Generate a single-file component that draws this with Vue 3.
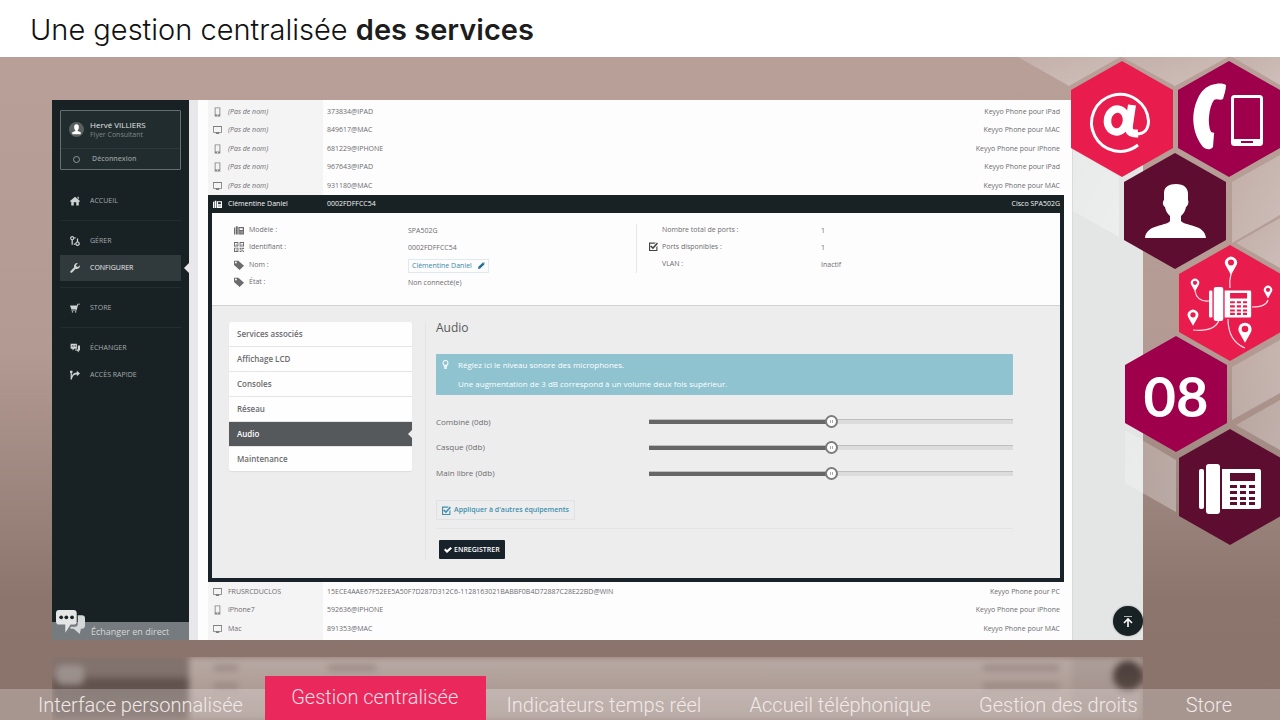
<script setup>
import { ref, h } from 'vue'

const icons = {
  tablet: 'M3 0h10v16H3zM4.500 1.500v11h7v-11zM7 13.500v1h2v-1z',
  desktop: 'M0 1h16v12h-5v2H5v-2H0zM1.500 2.500v9h13v-9z',
  desk: 'M0 4h2v11H0zM3 2h3v13H3zM7 3h9v12H7zM9 5v3h5V5zM9 9.500v1h1v-1zM11 9.500v1h1v-1zM13 9.500v1h1v-1zM9 12v1h1v-1zM11 12v1h1v-1zM13 12v1h1v-1z',
  qr: 'M0 0h7v7H0zM1.500 1.500v4h4v-4zM3 3h1.500v1.500H3zM9 0h7v7H9zM10.500 1.500v4h4v-4zM12 3h1.500v1.500H12zM0 9h7v7H0zM1.500 10.500v4h4v-4zM3 12h1.500v1.500H3zM9 9h3v3H9zM13 9h3v2h-3zM12 12h2v2h-2zM9 14h3v2H9zM14 14h2v2h-2z',
  tag: 'M0 1h7l9 8-7 7-9-8zM3 2.500a1.500 1.500 0 1 0 0 3 1.500 1.500 0 0 0 0-3z',
  ticked: 'M0 1h12l-2 2H2v11h11V9l2-2v9H0zM4 6l3 3 7-8 2 2-9 10-5-5z',
  pencil: 'M0 16l1-5L11 1l4 4L5 15zM12 0l1-.5L16 3l-.5 1z',
  home: 'M8 1l8 7-1 1.500-1-.8V15h-4v-5H6v5H2V8.700l-1 .8L0 8l8-7zM12 1h2v4l-2-1.500z',
  nodes: 'M3.500 0a3.500 3.500 0 0 1 1 6.800V14h-2V6.800A3.500 3.500 0 0 1 3.500 0zm0 2a1.500 1.500 0 1 0 0 3 1.500 1.500 0 0 0 0-3zM11 4h2v4.700a3.700 3.700 0 1 1-2 0zm1 6.500a1.700 1.700 0 1 0 0 3.400 1.700 1.700 0 0 0 0-3.400zM7 2h2v2H7zM6 12h2v2H6z',
  wrench: 'M15.700 3.500a5 5 0 0 1-6.500 5.800L3 15.400A1.800 1.800 0 0 1 .6 13L6.700 6.800A5 5 0 0 1 12.500.3L9.700 3.100l.6 2.600 2.600.6z',
  cart: 'M0 4h11l1-3h4v1.500h-3L10.500 12H2v-1.500h7l.3-1H2zM3 13h2v2H3zM8 13h2v2H8z',
  chat: 'M1 1h10v8H7l-3 3V9H1zM3 4v1.500h1.500V4zM5.500 4v1.500H7V4zM8 4v1.500h1.500V4zM12.500 4H16v8h-2v3l-3-3H8v-1.500h4.500z',
  branch: 'M0 1h4v4L3 4v6c1-4 4-6 8-6V1l5 4.500-5 4.500V7C7 7 4 9 3 15H1V4L0 5z',
  bulb: 'M8 0a5.500 5.500 0 0 1 3 10v2H5v-2A5.500 5.500 0 0 1 8 0zm0 2a3.500 3.500 0 0 0-2 6.400h4A3.500 3.500 0 0 0 8 2zM5.500 13h5v1.500L9 16H7l-1.500-1.500z',
  check: 'M0 8l3-3 3 3 7-6 3 3L6 14z'
}

const Icon = (props) =>
  h('svg', { viewBox: '0 0 16 16', 'aria-hidden': 'true' }, [
    h('path', { d: icons[props.name], fill: 'currentColor', 'fill-rule': 'evenodd' })
  ])
Icon.props = ['name']

const before = [
  ['tablet', '(Pas de nom)', '373834@IPAD', 'Keyyo Phone pour iPad'],
  ['desktop', '(Pas de nom)', '849617@MAC', 'Keyyo Phone pour MAC'],
  ['tablet', '(Pas de nom)', '681229@IPHONE', 'Keyyo Phone pour iPhone'],
  ['tablet', '(Pas de nom)', '967643@IPAD', 'Keyyo Phone pour iPad'],
  ['desktop', '(Pas de nom)', '931180@MAC', 'Keyyo Phone pour MAC']
]
const after = [
  ['desktop', 'FRUSRCDUCLOS', '15ECE4AAE67F52EE5A50F7D287D312C6-1128163021BABBF0B4D72887C28E22BD@WIN', 'Keyyo Phone pour PC'],
  ['tablet', 'iPhone7', '592636@IPHONE', 'Keyyo Phone pour iPhone'],
  ['desktop', 'Mac', '891353@MAC', 'Keyyo Phone pour MAC']
]
const menu = [
  [{ icon: 'home', label: 'ACCUEIL' }],
  [{ icon: 'nodes', label: 'GÉRER' }, { icon: 'wrench', label: 'CONFIGURER', active: true }],
  [{ icon: 'cart', label: 'STORE' }],
  [{ icon: 'chat', label: 'ÉCHANGER' }, { icon: 'branch', label: 'ACCÈS RAPIDE' }]
]
const tabs = ['Services associés', 'Affichage LCD', 'Consoles', 'Réseau', 'Audio', 'Maintenance']
const tab = ref('Audio')
const levels = ref([
  { id: 'combine', label: 'Combiné (0db)', value: 50 },
  { id: 'casque', label: 'Casque (0db)', value: 50 },
  { id: 'mainlibre', label: 'Main libre (0db)', value: 50 }
])
const chapters = ['Interface personnalisée', 'Gestion centralisée', 'Indicateurs temps réel', 'Accueil téléphonique', 'Gestion des droits', 'Store']
const chapter = ref('Gestion centralisée')

const hex = (x, y) => `${x},${y - 58} ${x + 51},${y - 29} ${x + 51},${y + 29} ${x},${y + 58} ${x - 51},${y + 29} ${x - 51},${y - 29}`
const cells = [
  { x: 1122, y: 119, fill: '#e91d4d' },
  { x: 1229, y: 119, fill: '#9e004c' },
  { x: 1175, y: 211, fill: '#5c0d30' },
  { x: 1230, y: 303, fill: '#e91d4d' },
  { x: 1176, y: 394, fill: '#9e004c' },
  { x: 1230, y: 487, fill: '#5c0d30' }
]
const pins = [[1231, 257, 1], [1195, 279, 0.7], [1268, 286, 0.7], [1193, 310, 0.88], [1245, 323, 1.1]]
</script>

<template>
  <div class="page">
    <header class="title"><h1>Une gestion centralisée <strong>des services</strong></h1></header>

    <main class="stage">
      <section class="window">
        <aside class="sidebar">
          <div class="user">
            <div class="who">
              <svg class="avatar" viewBox="0 0 16 16" aria-hidden="true"><circle cx="8" cy="8" r="8" fill="#59605f" /><path d="M5.500 5.500a2.500 3 0 0 1 5 0c0 1.500-.5 2.500-1.200 3.200v.8l3.200 1.300V13h-9v-2.200l3.200-1.300v-.8C6 8 5.500 7 5.500 5.500z" fill="#fff" /></svg>
              <div><b>Hervé VILLIERS</b><span>Flyer Consultant</span></div>
            </div>
            <button class="logout"><i></i>Déconnexion</button>
          </div>
          <nav class="menu">
            <ul v-for="(group, g) in menu" :key="g">
              <li v-for="item in group" :key="item.label">
                <a href="#" :class="{ active: item.active }"><Icon :name="item.icon" />{{ item.label }}</a>
              </li>
            </ul>
          </nav>
          <a class="live" href="#">
            <svg viewBox="0 0 28 24" aria-hidden="true"><path d="M21 5h4a3 3 0 0 1 3 3v7a3 3 0 0 1-3 3h-1l-1 5-6-5h-3v-2h5a2 2 0 0 0 2-2z" fill="#d5d8d8" /><path d="M3 0h14a3 3 0 0 1 3 3v8a3 3 0 0 1-3 3h-3l-5 8v-8H3a3 3 0 0 1-3-3V3a3 3 0 0 1 3-3z" fill="#e4e6e6" /><g fill="#1b2326"><circle cx="5" cy="7" r="1.800" /><circle cx="10" cy="7" r="1.800" /><circle cx="15.500" cy="7" r="1.800" /></g></svg>
            Échanger en direct
          </a>
        </aside>

        <div class="body">
          <table class="devices">
            <tbody>
              <tr v-for="row in before" :key="row[2]">
                <td class="name"><Icon :name="row[0]" /><em>{{ row[1] }}</em></td>
                <td>{{ row[2] }}</td>
                <td class="model">{{ row[3] }}</td>
              </tr>
            </tbody>
            <tbody class="open">
              <tr class="current">
                <td class="name"><Icon name="desk" />Clémentine Daniel</td>
                <td>0002FDFFCC54</td>
                <td class="model">Cisco SPA502G</td>
              </tr>
              <tr>
                <td class="detail" colspan="3">
                  <div class="facts">
                    <dl>
                      <div><dt><Icon name="desk" />Modèle :</dt><dd>SPA502G</dd></div>
                      <div><dt><Icon name="qr" />Identifiant :</dt><dd>0002FDFFCC54</dd></div>
                      <div><dt><Icon name="tag" />Nom :</dt><dd><button class="rename">Clémentine Daniel<Icon name="pencil" /></button></dd></div>
                      <div><dt><Icon name="tag" />État :</dt><dd>Non connecté(e)</dd></div>
                    </dl>
                    <dl class="ports">
                      <div><dt>Nombre total de ports :</dt><dd>1</dd></div>
                      <div><dt><Icon name="ticked" />Ports disponibles :</dt><dd>1</dd></div>
                      <div><dt>VLAN :</dt><dd>Inactif</dd></div>
                    </dl>
                  </div>
                  <div class="settings">
                    <nav class="tabs">
                      <button v-for="t in tabs" :key="t" :class="{ active: t === tab }" @click="tab = t">{{ t }}</button>
                    </nav>
                    <form class="audio" @submit.prevent>
                      <h2>Audio</h2>
                      <div class="hint">
                        <Icon name="bulb" />
                        <div><p>Réglez ici le niveau sonore des microphones.</p><p>Une augmentation de 3 dB correspond à un volume deux fois supérieur.</p></div>
                      </div>
                      <div class="levels">
                        <div v-for="l in levels" :key="l.id">
                          <label :for="l.id">{{ l.label }}</label>
                          <input :id="l.id" v-model="l.value" type="range" min="0" max="100" :style="{ '--level': l.value + '%' }" />
                        </div>
                      </div>
                      <button type="button" class="apply"><Icon name="ticked" />Appliquer à d'autres équipements</button>
                      <div class="actions"><button class="save"><Icon name="check" />ENREGISTRER</button></div>
                    </form>
                  </div>
                </td>
              </tr>
            </tbody>
            <tbody>
              <tr v-for="row in after" :key="row[2]">
                <td class="name"><Icon :name="row[0]" />{{ row[1] }}</td>
                <td>{{ row[2] }}</td>
                <td class="model">{{ row[3] }}</td>
              </tr>
            </tbody>
          </table>
        </div>
        <div class="gutter"></div>
        <button class="top" aria-label="Haut de page">
          <svg viewBox="0 0 30 30" aria-hidden="true"><path d="M11 10.500h8" stroke="#aeb4b5" /><path d="M15 21v-8M11 17l4-4 4 4" fill="none" stroke="#fff" stroke-width="1.600" /></svg>
        </button>
      </section>

      <div class="mirror" aria-hidden="true">
        <div class="m-side"><i></i></div>
        <div class="m-body"><p><i></i><i></i><i></i></p><p><i></i><i></i><i></i></p></div>
        <div class="m-gutter"><i></i></div>
      </div>
    </main>

    <svg class="comb" viewBox="1000 57 280 523" aria-hidden="true">
      <defs>
        <linearGradient id="pale" x1="0" y1="0" x2="1" y2="1"><stop offset="0" stop-color="#fff" stop-opacity=".17" /><stop offset="1" stop-color="#fff" stop-opacity=".32" /></linearGradient>
        <g id="deskphone">
          <rect x="0" y="5" width="5" height="40" rx="2" /><rect x="7" y="0" width="14" height="50" rx="3" />
          <path fill-rule="evenodd" d="M23 5h37a2 2 0 0 1 2 2v36a2 2 0 0 1-2 2H23zM31 9v8h25V9zM31 21v3h7v-3zM41 21v3h6v-3zM50 21v3h6v-3zM31 27v3h7v-3zM41 27v3h6v-3zM50 27v3h6v-3zM31 33v3h7v-3zM41 33v3h6v-3zM50 33v3h6v-3zM31 38v3h7v-3zM41 38v3h6v-3zM50 38v3h6v-3z" />
        </g>
        <path id="pin" fill-rule="evenodd" d="M0 10L-5 1A6 6 0 1 1 5 1zM0-5.500a3 3 0 1 0 0 6 3 3 0 0 0 0-6z" />
      </defs>
      <g fill="url(#pale)">
        <polygon points="1018,57 1120,57 1069,86" />
        <polygon points="1122,57 1228,57 1175,86" />
        <polygon points="1232,57 1280,57 1280,85" />
        <polygon points="1073,150 1119,177 1119,237 1073,211" />
        <polygon points="1232,182 1280,155 1280,215 1232,243" />
        <polygon points="1236,243 1280,218 1280,268" />
        <polygon points="1232,367 1280,340 1280,393 1232,420" />
        <polygon points="1236,425 1280,400 1280,450" />
        <polygon points="1125,430 1176,460 1176,512 1125,483" />
      </g>
      <polygon v-for="c in cells" :key="c.x + '-' + c.y" :points="hex(c.x, c.y)" :fill="c.fill" />
      <g fill="none" stroke="#fff">
        <path d="M1138 145A28.500 28.500 0 1 1 1148.500 121c0 9-5 13-12 13" stroke-width="3" />
        <ellipse cx="1117" cy="120.500" rx="9.500" ry="11.500" stroke-width="7.500" transform="rotate(8 1117 120.500)" />
        <path d="M1132 105l-3 20c-1 7 2 9 9 8.500" stroke-width="8" />
      </g>
      <g fill="#fff">
        <path d="M1216 84c4-1 9 0 10 1 0 5-2 10-3 14-3 2-6-1-9 1-5 7-7 24-3 32 2 1 4 0 3 2l-1 13c-3 4-8 2-10 0-11-14-13-34-4-51 4-7 9-11 17-12z" />
        <rect x="1232.500" y="96.500" width="29" height="48" rx="2" fill="none" stroke="#fff" stroke-width="3" />
        <path fill-rule="evenodd" d="M1232 139h30v6h-30zM1241 141v2h12v-2z" />
        <path d="M1164 193c0-6 5-9 12-9 8 0 12 4 12 10v6c1 2 0 6-2 7-1 5-3 7-5 9v5c3 5 24 3 25 17h-61c1-14 23-12 25-17v-5c-2-2-4-4-5-9-2-1-3-5-1-7z" />
        <use href="#deskphone" x="1199" y="464" />
        <g transform="translate(1209 287) scale(.68)"><use href="#deskphone" /></g>
        <g v-for="p in pins" :key="p[0]" :transform="`translate(${p[0]} ${p[1] + 8 * p[2]}) scale(${p[2]})`"><use href="#pin" /></g>
      </g>
      <g fill="none" stroke="#fff" stroke-width="1.200" opacity=".85"><path d="M1231 274q-2 7-1 14M1195 291q2 11 14 10M1252 307q14 0 16-7M1193 330q22 2 26-10M1228 319q0 22 17 29" /></g>
      <text class="eight" x="1176" y="417" text-anchor="middle" fill="#fff">08</text>
    </svg>

    <nav class="chapters">
      <a v-for="c in chapters" :key="c" href="#" :class="{ active: c === chapter }" @click.prevent="chapter = c">{{ c }}</a>
    </nav>
  </div>
</template>

<style>
html, body { margin: 0; }
</style>

<style scoped>
* { box-sizing: border-box; }
.page { position: relative; min-height: 100vh; overflow: hidden; display: flex; flex-direction: column; background: linear-gradient(#b8a099 60px, #b39b94 350px, #8b756d 600px, #8a736a); font-family: "Open Sans", sans-serif; font-size: 7px; line-height: 10px; color: #6c6c6e; }
button, input { font: inherit; color: inherit; margin: 0; border: 0; padding: 0; background: none; }
a { color: inherit; text-decoration: none; }
ul, dl, dd, p, h1, h2 { margin: 0; padding: 0; }
ul { list-style: none; }
.title { position: relative; z-index: 3; display: flex; align-items: center; height: 57px; padding: 2px 30px 0; background: #fff; }
h1 { font-family: Inter, sans-serif; font-size: 29px; line-height: 40px; font-weight: 300; color: #111; }
h1 strong { font-weight: 600; color: #1d1d1d; }
.stage { flex: 1; padding: 43px 137px 0 52px; }
.window { position: relative; display: flex; background: #fefdfe; }

.sidebar { position: relative; display: flex; flex-direction: column; width: 137px; background: #182225; color: #a5abac; }
.user { margin: 10px 8px 11px; border: 1px solid #657070; border-radius: 1px; background: #202c2e; }
.who { display: flex; align-items: center; gap: 6px; height: 38px; padding-left: 8px; border-bottom: 1px solid #2d393a; }
.avatar { width: 15px; height: 15px; }
.who b, .who span { display: block; }
.who b { font-weight: 400; font-size: 8px; color: #e2e5e5; }
.who span { color: #7f8888; }
.logout { display: flex; align-items: center; gap: 12px; width: 100%; height: 20px; padding-left: 12px; font-weight: 600; color: #929999; }
.logout i { width: 7px; height: 7px; border: 1px solid #929999; border-radius: 50%; }
.menu { padding: 0 8px; }
.menu ul { padding: 7px 0 6px; }
.menu ul + ul { border-top: 1px solid #222d30; }
.menu li + li { margin-top: 1px; }
.menu a { position: relative; display: flex; align-items: center; gap: 10px; height: 26px; padding-left: 10px; }
.menu svg { width: 10px; height: 10px; color: #cfd3d3; }
.menu .active { background: #30393b; color: #eceeee; }
.menu .active::after { content: ""; position: absolute; right: -8px; top: 8px; border: 5px solid transparent; border-left: 0; border-right-color: #e8e8ea; }
.live { position: relative; margin-top: auto; height: 18px; padding-left: 39px; font-size: 9px; line-height: 19px; background: #757b7e; color: #d5d8d8; }
.live svg { position: absolute; left: 4px; bottom: 5px; width: 29px; height: 25px; }

.body { flex: 1; min-width: 0; padding: 0 8px 0 10px; border-left: 9px solid #e8e8ea; }
.gutter { width: 71px; background: #e4e6e6; border-left: 1px solid #d9dbdb; }
.devices { width: 100%; border-collapse: separate; border-spacing: 0; table-layout: fixed; }
.devices td { height: 18px; padding: 0 4px; white-space: nowrap; }
.devices tr:nth-child(odd) > td { height: 19px; }
.devices tbody:first-child tr:first-child > td { height: 21px; padding-top: 3px; }
.devices tbody:last-child tr:last-child > td { height: 21px; padding-bottom: 2px; }
.devices tr > .name { width: 115px; padding-left: 20px; background: #f5f4f5; position: relative; }
.devices .name svg { position: absolute; left: 5px; bottom: 4px; width: 9px; height: 10px; color: #808082; }
.devices tbody:last-child tr:last-child svg { bottom: 6px; }
.devices tr > .model { width: 130px; text-align: right; }
.devices .open .current > td { height: 18px; background: #182225; color: #f2f3f3; }
.devices .current svg { color: #fff; }
.devices tr > .detail { padding: 0; white-space: normal; border: 4px solid #182228; border-top: 0; background: #ededed; }

.facts { display: grid; grid-template-columns: 1fr 1fr; align-items: start; height: 93px; padding: 8px 0 14px; background: #fefdfe; border-bottom: 1px solid #d2d2d2; }
dl { display: grid; grid-auto-rows: 1fr; height: 70px; padding-left: 37px; }
dl > div { display: grid; grid-template-columns: 159px 1fr; align-items: center; }
dt { position: relative; }
dt svg { position: absolute; left: -15px; top: 0; width: 10px; height: 10px; }
dd { padding-top: 2px; }
.ports { height: 52px; padding-left: 26px; background: linear-gradient(#e8e8e8, #e8e8e8) 0 3px / 1px 50px no-repeat; }
.ports dt svg { width: 9px; height: 9px; left: -13px; color: #444; }
.rename { display: flex; align-items: center; gap: 6px; height: 14px; padding: 0 3px; border: 1px solid #dfe9ee; color: #3a88a8; }
.rename svg { width: 7px; height: 7px; color: #21708f; }

.settings { display: flex; align-items: flex-start; height: 272px; padding: 16px 47px 18px 17px; }
.tabs { display: grid; gap: 1px; width: 183px; background: #e5e5e5; border-radius: 2px; overflow: hidden; box-shadow: 0 1px 1px #ddd; }
.tabs button { position: relative; height: 24px; padding-left: 8px; text-align: left; font-size: 8px; font-weight: 600; background: #fefefe; }
.tabs .active { background: #55595b; color: #fff; }
.tabs .active::after { content: ""; position: absolute; right: 0; top: 8px; border: 4px solid transparent; border-left: 0; border-right-color: #ededed; }
.audio { flex: 1; min-width: 0; align-self: stretch; margin-left: 13px; padding-left: 10px; border-left: 1px solid #e4e4e4; font-size: 8px; }
h2 { font-size: 12px; line-height: 12px; font-weight: 400; color: #58595b; }
.hint { display: flex; gap: 8px; height: 41px; margin: 20px 0 14px; padding: 1px 5px; border-radius: 1px; background: #8fc3d0; color: #fff; }
.hint svg { width: 9px; height: 9px; margin-top: 5px; }
.hint p { line-height: 19px; }
.levels { display: grid; grid-auto-rows: 1fr; height: 77px; margin-bottom: 14px; }
.levels > div { display: grid; grid-template-columns: 37% 63%; align-items: center; }
.levels input { -webkit-appearance: none; appearance: none; width: 100%; height: 13px; }
.levels input::-webkit-slider-runnable-track { height: 5px; border-top: 1px solid #0002; background: linear-gradient(#666, #666) 0 0 / var(--level) 100% no-repeat #dcdcdc; }
.levels input::-webkit-slider-thumb { -webkit-appearance: none; width: 13px; height: 13px; margin-top: -5px; border: 2px solid #7c7c7c; border-radius: 50%; background: linear-gradient(90deg, #aaa 1px, #fff 1px, #fff 2px, #aaa 2px) center / 3px 3px no-repeat #fff; }
.apply { display: flex; align-items: center; gap: 3px; height: 20px; padding: 0 5px; border: 1px solid #dfe1e2; font-size: 7px; font-weight: 600; color: #4090ae; }
.apply svg { width: 9px; height: 9px; }
.actions { margin-top: 8px; padding: 11px 3px 0; border-top: 1px solid #e4e4e4; }
.save { display: flex; align-items: center; gap: 2px; height: 19px; padding: 0 5px; border-radius: 1px; background: #18222a; color: #fff; font-size: 7px; font-weight: 600; }
.save svg { width: 8px; height: 8px; }
.top { position: absolute; right: 0; bottom: 4px; width: 30px; height: 30px; border-radius: 50%; background: #182225; box-shadow: 0 0 2px #0006; }
.top svg { display: block; }

.mirror { display: flex; height: 63px; margin-top: 17px; filter: blur(3px); opacity: .6; -webkit-mask-image: linear-gradient(#000, #0008); mask-image: linear-gradient(#000, #0008); }
.m-side { width: 137px; padding: 8px 4px; background: linear-gradient(#7b7170 18px, #352e2d 24px); }
.m-side i { display: block; width: 28px; height: 20px; border-radius: 6px; background: #aaa; }
.m-body { flex: 1; padding: 8px 13px 0 25px; background: #d8cdca; }
.m-body p { display: flex; height: 18px; }
.m-body i { width: 24px; height: 6px; background: #a99d9b; }
.m-body i:nth-child(2) { width: 48px; margin-left: 90px; }
.m-body i:nth-child(3) { width: 76px; margin-left: auto; }
.m-gutter { width: 71px; padding: 4px 0 0 41px; background: #c6bcba; }
.m-gutter i { display: block; width: 30px; height: 30px; border-radius: 50%; background: #1c1716; }

.comb { position: absolute; z-index: 2; top: 57px; right: 0; width: 280px; height: 523px; pointer-events: none; }
.eight { font: 700 56px Lato, sans-serif; }

.chapters { position: absolute; z-index: 3; left: 0; right: 0; bottom: 0; display: flex; justify-content: space-between; height: 31px; padding: 0 48px 0 38px; background: #ffffff40; font-family: Roboto, "Liberation Sans", sans-serif; font-weight: 300; font-size: 20px; line-height: 32px; color: #f1e9e7; white-space: nowrap; }
.chapters .active { height: 44px; margin: -13px -28px 0 -26px; padding: 0 28px 0 26px; line-height: 42px; background: #ea285b; color: #fbdde5; }
</style>
